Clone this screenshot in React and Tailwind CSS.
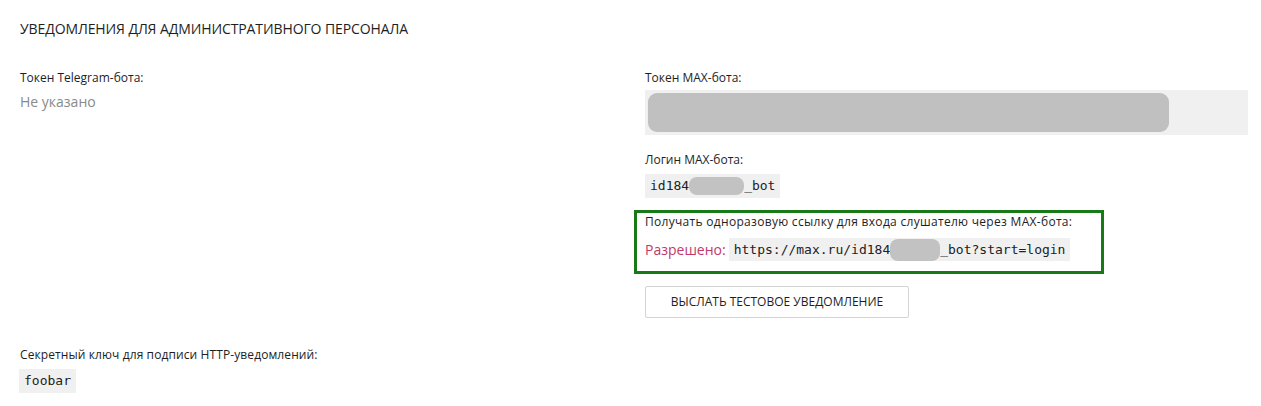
import React from "react";

const sans = { fontFamily: '"Open Sans", "Noto Sans", sans-serif' };

function Code({ children, className = "" }) {
  return (
    <span className={`inline-flex items-center bg-[#f0f0f0] px-[5px] text-[13px] text-[#222] font-['DejaVu_Sans_Mono',monospace] ${className}`}>
      {children}
    </span>
  );
}

function Blur({ w, h = "h-[18px]" }) {
  return <span className={`inline-block ${w} ${h} rounded-[8px] bg-[#c2c2c2] align-middle`} />;
}

export default function App() {
  return (
    <div className="bg-white w-[1261px] h-[406px] overflow-hidden px-5 pt-[19px] text-[#1e1e1e] font-['Open_Sans','Noto_Sans',sans-serif]">
      <h2 className="text-[14px] leading-[20px] font-normal uppercase tracking-[-0.1px]">
        Уведомления для административного персонала
      </h2>

      <div className="grid grid-cols-[625px_603px] mt-[30px]">
        <div>
          <div className="text-[12px] leading-[18px]">Токен Telegram-бота:</div>
          <div className="mt-[5px] text-[14px] leading-[20px] text-[#8a8a8a]">Не указано</div>
        </div>

        <div className="flex flex-col items-start">
          <div className="text-[12px] leading-[18px]">Токен MAX-бота:</div>
          <div className="mt-[3px] w-full h-[45px] bg-[#f0f0f0] p-[3px] pr-[79px]">
            <div className="h-full rounded-[9px] bg-[#c0c0c0]" />
          </div>

          <div className="mt-4 text-[12px] leading-[18px]">Логин MAX-бота:</div>
          <Code className="mt-[5px] h-[24px]">
            id184<Blur w="w-[55px]" />_bot
          </Code>

          <div className="mt-3 -ml-[11px] w-[470px] border-[3px] border-[#177a17] pl-2 pt-0 pb-[10px]">
            <div className="text-[12px] leading-[18px] tracking-[0.3px]">
              Получать одноразовую ссылку для входа слушателю через MAX-бота:
            </div>
            <div className="mt-[7px] flex items-center gap-[3px]">
              <span className="text-[14px] text-[#c0396a]">Разрешено:</span>
              <Code className="h-[23px]">
                https://max.ru/id184<Blur w="w-[50px]" h="h-[22px]" />_bot?start=login
              </Code>
            </div>
          </div>

          <button className="mt-3 w-[264px] h-[32px] border border-[#d4d4d4] rounded-[2px] bg-white text-[12px] uppercase text-[#1e1e1e]" style={sans}>
            Выслать тестовое уведомление
          </button>
        </div>
      </div>

      <div className="mt-[28px]">
        <div className="text-[12px] leading-[18px] tracking-[0.1px]">Секретный ключ для подписи HTTP-уведомлений:</div>
        <Code className="mt-[5px] h-[24px] -ml-px">foobar</Code>
      </div>
    </div>
  );
}
